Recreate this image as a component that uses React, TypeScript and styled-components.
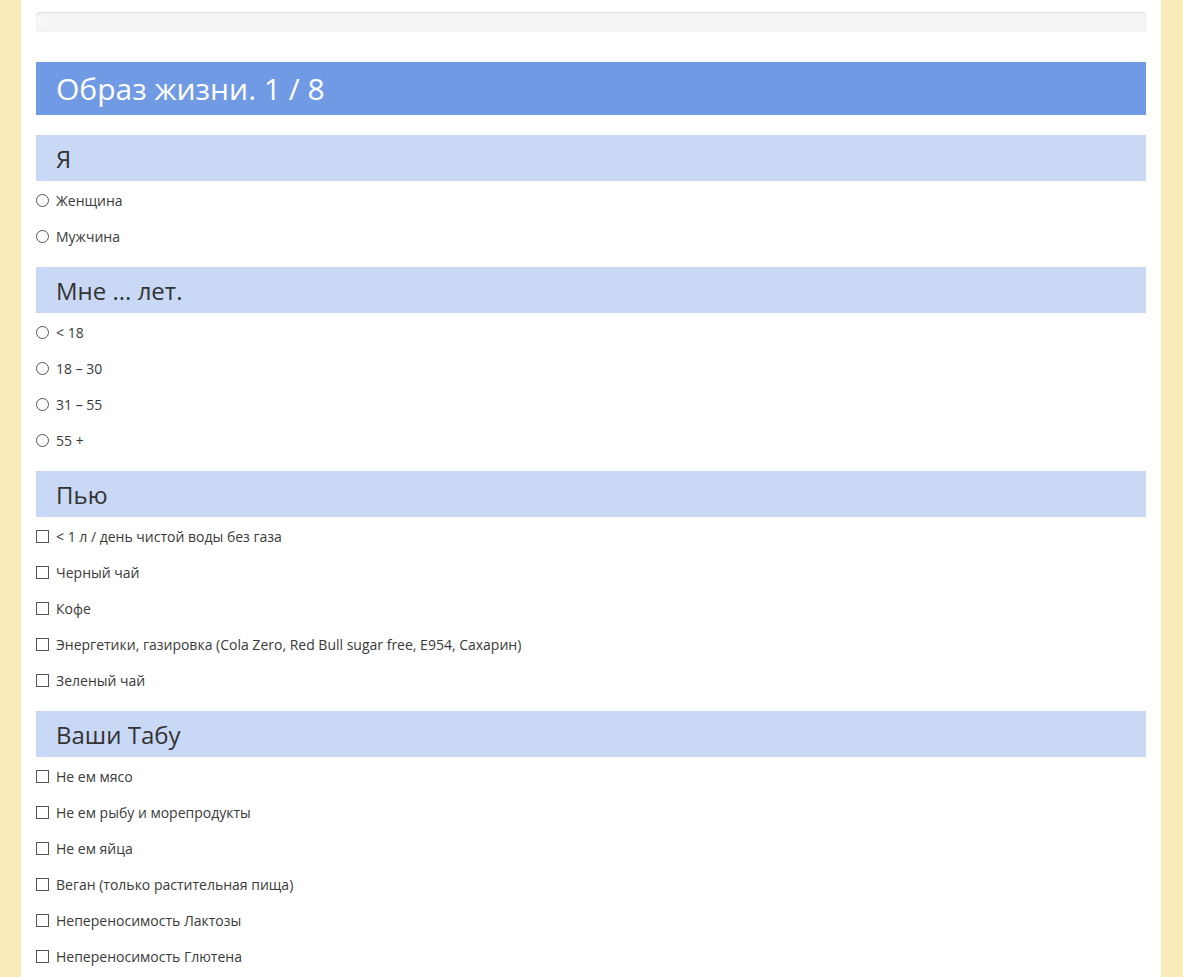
import React from 'react';
import styled, { createGlobalStyle } from 'styled-components';

type Section = {
  title: string;
  kind: 'radio' | 'checkbox';
  options: string[];
};

const sections: Section[] = [
  { title: 'Я', kind: 'radio', options: ['Женщина', 'Мужчина'] },
  { title: 'Мне ... лет.', kind: 'radio', options: ['< 18', '18 – 30', '31 – 55', '55 +'] },
  {
    title: 'Пью',
    kind: 'checkbox',
    options: [
      '< 1 л / день чистой воды без газа',
      'Черный чай',
      'Кофе',
      'Энергетики, газировка (Cola Zero, Red Bull sugar free, E954, Сахарин)',
      'Зеленый чай',
    ],
  },
  {
    title: 'Ваши Табу',
    kind: 'checkbox',
    options: [
      'Не ем мясо',
      'Не ем рыбу и морепродукты',
      'Не ем яйца',
      'Веган (только растительная пища)',
      'Непереносимость Лактозы',
      'Непереносимость Глютена',
    ],
  },
];

const GlobalStyle = createGlobalStyle`
  html, body {
    margin: 0;
    padding: 0;
    background: #f9ecb8;
    font-family: "Open Sans", "Noto Sans", sans-serif;
    color: #333;
  }
  body {
    padding-right: 1px;
  }
`;

const App = () => {
  return (
    <>
      <GlobalStyle />
      <Page>
        <Progress>
          <ProgressBar>0%</ProgressBar>
        </Progress>
        <StepTitle>Образ жизни. 1 / 8</StepTitle>
        {sections.map((s) => (
          <Block key={s.title}>
            <BlockTitle>{s.title}</BlockTitle>
            <OptionList>
              {s.options.map((o) => (
                <Option key={o}>
                  <Mark $round={s.kind === 'radio'} />
                  <span>{o}</span>
                </Option>
              ))}
            </OptionList>
          </Block>
        ))}
      </Page>
    </>
  );
};

const Page = styled.div`
  width: 1140px;
  margin: 0 auto;
  padding: 12px 15px 40px;
  box-sizing: border-box;
  background: #fff;
  min-height: 977px;
`;

const Progress = styled.div`
  height: 20px;
  border-radius: 4px;
  background: #f5f5f5;
  box-shadow: inset 0 1px 2px rgba(0, 0, 0, 0.1);
  overflow: hidden;
  margin-bottom: 30px;
`;

const ProgressBar = styled.div`
  width: 0;
  height: 20px;
  font-size: 12px;
  line-height: 20px;
  color: #fff;
  white-space: nowrap;
  text-indent: -3px;
`;

const StepTitle = styled.h1`
  margin: 0 0 20px;
  height: 53px;
  display: flex;
  align-items: center;
  padding: 0 20px;
  background: #719ae4;
  color: #fff;
  font-size: 30px;
  font-weight: 400;
`;

const Block = styled.section`
  margin-bottom: 12px;
`;

const BlockTitle = styled.h2`
  margin: 0;
  height: 46px;
  display: flex;
  align-items: center;
  padding: 0 20px;
  background: #c9d8f5;
  color: #333;
  font-size: 24px;
  font-weight: 400;
`;

const OptionList = styled.div`
  padding-top: 1px;
  padding-bottom: 1px;
  display: flex;
  flex-direction: column;
`;

const Option = styled.label`
  height: 36px;
  display: flex;
  align-items: center;
  gap: 7px;
  font-size: 14px;
  color: #3a3a3a;
`;

const Mark = styled.span<{ $round: boolean }>`
  width: 11px;
  height: 11px;
  border: 1px solid #555;
  border-radius: ${(p) => (p.$round ? '50%' : '0')};
  background: #fff;
  flex-shrink: 0;
`;

export default App;
